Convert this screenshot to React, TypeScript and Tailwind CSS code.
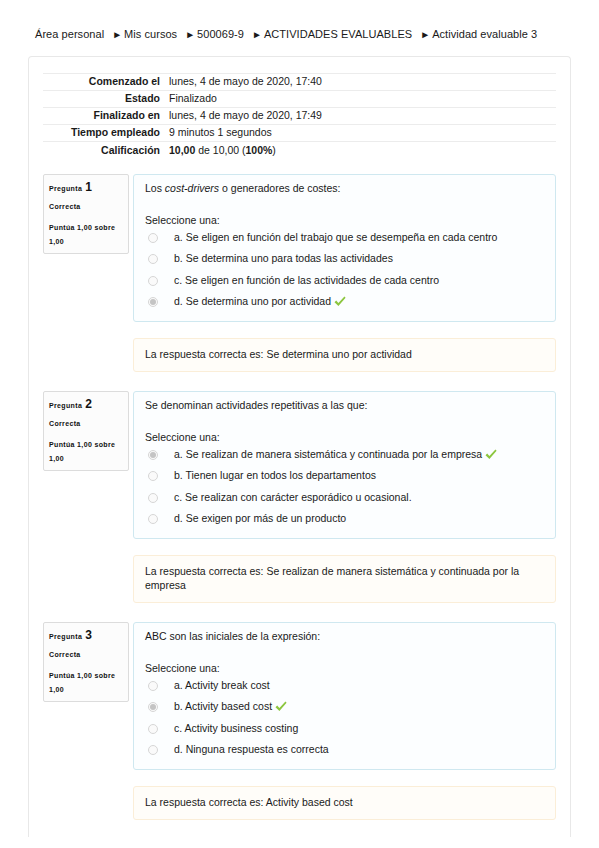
import React from "react";

type Q = {
  n: number;
  prompt: React.ReactNode;
  options: string[];
  correct: number;
  feedback: string;
};

const questions: Q[] = [
  {
    n: 1,
    prompt: (
      <>
        Los <i>cost-drivers</i> o generadores de costes:
      </>
    ),
    options: [
      "a. Se eligen en función del trabajo que se desempeña en cada centro",
      "b. Se determina uno para todas las actividades",
      "c. Se eligen en función de las actividades de cada centro",
      "d. Se determina uno por actividad",
    ],
    correct: 3,
    feedback: "La respuesta correcta es: Se determina uno por actividad",
  },
  {
    n: 2,
    prompt: <>Se denominan actividades repetitivas a las que:</>,
    options: [
      "a. Se realizan de manera sistemática y continuada por la empresa",
      "b. Tienen lugar en todos los departamentos",
      "c. Se realizan con carácter esporádico u ocasional.",
      "d. Se exigen por más de un producto",
    ],
    correct: 0,
    feedback:
      "La respuesta correcta es: Se realizan de manera sistemática y continuada por la empresa",
  },
  {
    n: 3,
    prompt: <>ABC son las iniciales de la expresión:</>,
    options: [
      "a. Activity break cost",
      "b. Activity based cost",
      "c. Activity business costing",
      "d. Ninguna respuesta es correcta",
    ],
    correct: 1,
    feedback: "La respuesta correcta es: Activity based cost",
  },
];

function Check() {
  return (
    <svg width="12" height="11" viewBox="0 0 12 11" className="inline-block ml-[3px] -mt-[2px] align-middle">
      <path d="M0.5 6.2 L2.2 4.6 L4.4 7 L10.4 0.6 L11.6 1.8 L4.4 10 Z" fill="#8cc63f" />
    </svg>
  );
}

function Radio({ checked }: { checked: boolean }) {
  return (
    <span className="w-[10px] h-[10px] rounded-full border border-[#d6d6d6] bg-[#fafafa] flex items-center justify-center">
      {checked && <span className="w-[6px] h-[6px] rounded-full bg-[#c4c4c4]" />}
    </span>
  );
}

function Question({ q }: { q: Q }) {
  return (
    <div className="mb-[19px]">
      <div className="flex gap-[4px]">
        <div className="w-[86px] h-[80px] shrink-0 border border-[#dcdcdc] rounded-[2px] bg-[#fcfcfc] pl-[5px] pt-[4px] text-[#111] tracking-[0.35px]">
          <div className="flex items-baseline gap-[3px] leading-[16px]">
            <span className="text-[7px] font-bold">Pregunta</span>
            <span className="text-[12px] font-bold">{q.n}</span>
          </div>
          <div className="text-[7px] font-bold leading-[10px] mt-[5px]">Correcta</div>
          <div className="text-[7px] font-bold leading-[14px] mt-[9px]">
            Puntúa 1,00 sobre
            <br />
            1,00
          </div>
        </div>
        <div className="flex-1">
          <div className="border border-[#cfe8f0] bg-[#fcfeff] rounded-[3px] pl-[11px] pt-[6px] pb-[8px]">
            <div className="leading-[14px]">{q.prompt}</div>
            <div className="leading-[14px] mt-[18px]">Seleccione una:</div>
            <div>
              {q.options.map((o, i) => (
                <div key={i} className="flex items-center h-[21.5px]">
                  <div className="w-[29px] pl-[3px] flex items-center">
                    <Radio checked={i === q.correct} />
                  </div>
                  <span>
                    {o}
                    {i === q.correct && <Check />}
                  </span>
                </div>
              ))}
            </div>
          </div>
          <div className="mt-[16px] border border-[#fbeed8] bg-[#fffdf9] rounded-[3px] pl-[11px] pr-[20px] pt-[7.5px] pb-[10.5px] leading-[14px]">
            {q.feedback}
          </div>
        </div>
      </div>
    </div>
  );
}

function Arrow() {
  return <span className="ml-[8px] mr-[2px] text-[10px]">►</span>;
}

export default function App() {
  const rows: [string, React.ReactNode][] = [
    ["Comenzado el", "lunes, 4 de mayo de 2020, 17:40"],
    ["Estado", "Finalizado"],
    ["Finalizado en", "lunes, 4 de mayo de 2020, 17:49"],
    ["Tiempo empleado", "9 minutos 1 segundos"],
    [
      "Calificación",
      <>
        <b>10,00</b> de 10,00 (<b>100%</b>)
      </>,
    ],
  ];
  return (
    <div className="w-[599px] h-[848px] bg-white text-[#1a1a1a] text-[10.5px] font-['Liberation_Sans',Arial,sans-serif] pt-[27px] overflow-hidden">
      <div className="pl-[35px] leading-[14px] text-[11px] tracking-[0.05px] whitespace-nowrap">
        <span>Área personal</span>
        <Arrow />
        <span>Mis cursos</span>
        <Arrow />
        <span>500069-9</span>
        <Arrow />
        <span>ACTIVIDADES EVALUABLES</span>
        <Arrow />
        <span>Actividad evaluable 3</span>
      </div>
      <div className="ml-[28px] mt-[14px] w-[543px] h-[781px] border border-b-0 border-[#e8e8e8] rounded-t-[4px] pt-[16px] px-[14px]">
        <div className="mb-[15px]">
          {rows.map(([l, v], i) => (
            <div
              key={i}
              className={`flex h-[17px] items-center ${i < rows.length - 1 ? "border-t border-[#ececec]" : "border-t border-[#ececec] h-[18px] pt-[1px]"}`}
            >
              <div className="w-[117px] text-right font-bold">{l}</div>
              <div className="ml-[9px]">{v}</div>
            </div>
          ))}
        </div>
        {questions.map((q) => (
          <Question key={q.n} q={q} />
        ))}
      </div>
    </div>
  );
}
